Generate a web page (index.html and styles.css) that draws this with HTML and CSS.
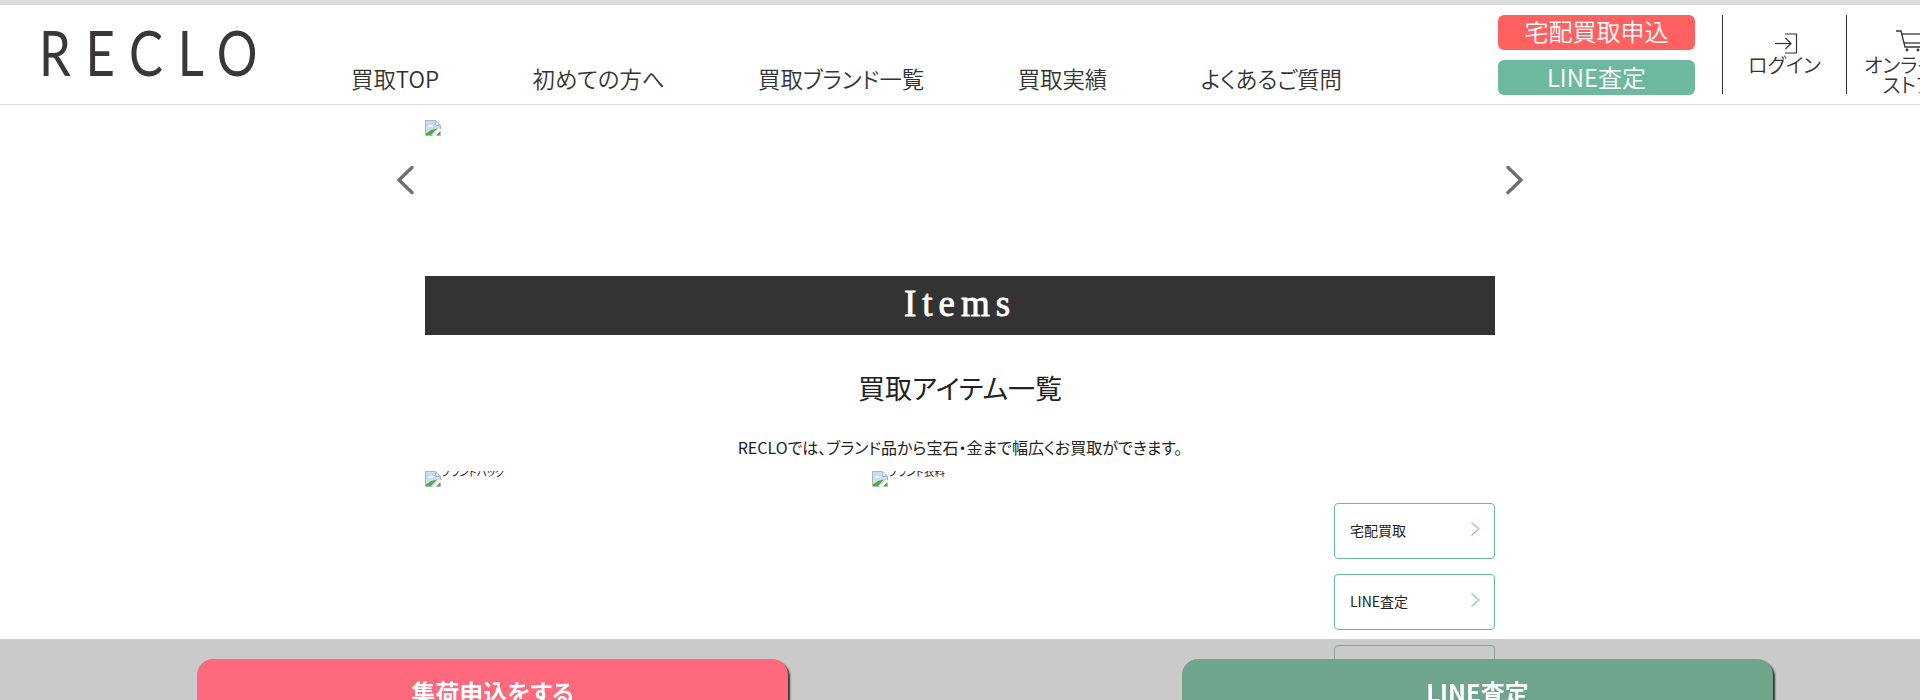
FILE: index.html
```html
<!DOCTYPE html>
<html lang="ja">
<head>
<meta charset="utf-8">
<title>RECLO</title>
<link rel="stylesheet" href="styles.css">
</head>
<body>
<svg class="defs" width="0" height="0" aria-hidden="true">
  <symbol id="broken" viewBox="0 0 16 16">
    <path d="M.5 .5H10.5L15.5 5.5V15.5H.5Z" fill="#c9dcf8" stroke="#b4b4b4"/>
    <path d="M10.5 .5V5.5H15.5Z" fill="#fff" stroke="#b4b4b4"/>
    <path d="M3 7Q5.5 3 8.5 7Z" fill="#fff"/>
    <path d="M1 15V13.5L6 10L12 8.5L6 15Z" fill="#4fae3c"/>
    <path d="M7 16L14 8.5L16 9.5V11L11 16Z" fill="#fff"/>
    <path d="M11.5 15L15 11.5V15Z" fill="#4fae3c"/>
  </symbol>
</svg>
<header class="header">
  <div class="logo-box"><a class="logo">RECLO</a></div>
  <nav class="nav">
    <a>買取TOP</a>
    <a>初めての方へ</a>
    <a>買取ブランド一覧</a>
    <a>買取実績</a>
    <a>よくあるご質問</a>
  </nav>
  <div class="cta">
    <a class="cta-btn cta-red">宅配買取申込</a>
    <a class="cta-btn cta-green">LINE査定</a>
  </div>
  <a class="util util-login">
    <svg class="util-icon" width="24" height="21" viewBox="0 0 24 21" fill="none" stroke="#333" stroke-width="1.2"><path d="M11 1H22.5V20H11"/><path d="M1 10.5H17"/><path d="M11.5 5L17 10.5L11.5 16"/></svg>
    <span>ログイン</span>
  </a>
  <a class="util util-store">
    <svg class="util-icon" width="26" height="22" viewBox="0 0 26 22" fill="none" stroke="#333" stroke-width="1.3"><path d="M0 1H5L9 17H25"/><path d="M6 4H26"/><path d="M8 13H26"/><circle cx="11" cy="20" r="1.4" fill="#333" stroke="none"/><circle cx="22" cy="20" r="1.4" fill="#333" stroke="none"/></svg>
    <span>オンライン<br>ストア</span>
  </a>
</header>
<main class="main">
  <section class="carousel">
    <svg class="broken"><use href="#broken"/></svg>
    <svg class="arrow arrow-left" width="20" height="32" viewBox="0 0 20 32" fill="none" stroke="#6e6e6e" stroke-width="3.4" stroke-linecap="round"><path d="M17 3.5L4 16L17 28.5"/></svg>
    <svg class="arrow arrow-right" width="20" height="32" viewBox="0 0 20 32" fill="none" stroke="#6e6e6e" stroke-width="3.4" stroke-linecap="round"><path d="M3 3.5L16 16L3 28.5"/></svg>
  </section>
  <h2 class="band">Items</h2>
  <h3 class="title">買取アイテム一覧</h3>
  <p class="lead">RECLOでは、ブランド品から宝石・金まで幅広くお買取ができます。</p>
  <div class="items">
    <div class="thumb"><svg class="broken"><use href="#broken"/></svg><span class="alt">ブランドバッグ</span></div>
    <div class="thumb"><svg class="broken"><use href="#broken"/></svg><span class="alt">ブランド衣料</span></div>
    <div class="cards">
      <a class="card">宅配買取<svg class="chev" width="11" height="16" viewBox="0 0 11 16" fill="none" stroke="#8fcdb8" stroke-width="1.2"><path d="M1.5 1.5L9 8L1.5 14.5"/></svg></a>
      <a class="card">LINE査定<svg class="chev" width="11" height="16" viewBox="0 0 11 16" fill="none" stroke="#8fcdb8" stroke-width="1.2"><path d="M1.5 1.5L9 8L1.5 14.5"/></svg></a>
      <a class="card">店頭買取</a>
    </div>
  </div>
</main>
<div class="sticky">
  <a class="sticky-btn sticky-pink">集荷申込をする</a>
  <a class="sticky-btn sticky-green">LINE査定</a>
</div>
</body>
</html>
```

FILE: styles.css
```css
* { box-sizing: border-box; }
html, body { height: 100%; }
body {
  margin: 0;
  height: 700px;
  overflow: hidden;
  background: #fff;
  color: #333;
  font-family: "Noto Sans CJK JP", "Noto Sans", sans-serif;
  font-feature-settings: "palt";
}
.defs { position: absolute; }
.header {
  display: flex;
  width: 1980px;
  height: 105px;
  border-top: 5px solid #dcdcdc;
  border-bottom: 1px solid #dcdcdc;
}
.logo-box {
  width: 351px;
  padding: 13px 0 0 39px;
}
.logo {
  display: inline-block;
  font-family: Lato, sans-serif;
  font-weight: 400;
  font-size: 62px;
  line-height: 68px;
  letter-spacing: 18px;
  color: #3a3836;
  transform: scaleX(.82);
  transform-origin: left center;
}
.nav {
  display: flex;
  gap: 93.5px;
  width: 1147px;
  padding-top: 55px;
  font-size: 22.4px;
  line-height: 36px;
  font-weight: 350;
}
.cta {
  display: flex;
  flex-direction: column;
  gap: 10px;
  width: 197px;
  padding-top: 10px;
}
.cta-btn {
  display: block;
  height: 35px;
  border-radius: 6px;
  color: #fff;
  font-size: 24px;
  line-height: 32px;
  font-weight: 350;
  text-align: center;
}
.cta-red { background: #ff6161; }
.cta-green { background: #6db9a0; line-height: 33px; }
.util {
  display: flex;
  flex-direction: column;
  align-items: center;
  flex: none;
  width: 124px;
  height: 79px;
  margin-top: 10px;
  border-left: 1px solid #333;
  font-size: 20px;
  line-height: 20px;
  font-weight: 350;
  text-align: center;
}
.util-login { margin-left: 27px; padding-top: 18px; }
.util-login .util-icon { margin: 0 0 1px 2px; }
.util-store { padding-top: 15px; }
.util-store .util-icon { margin: 0 0 3px 0; }
.util-icon { display: block; flex: none; }
.main { width: 1070px; margin: 0 auto; }
.carousel { position: relative; height: 171px; padding-top: 15px; }
.broken { display: block; flex: none; width: 16px; height: 16px; }
.arrow { position: absolute; top: 59px; }
.arrow-left { left: -30px; }
.arrow-right { right: -30px; }
.band {
  margin: 0;
  height: 59px;
  background: #333;
  color: #fff;
  font-family: "Liberation Serif", serif;
  font-size: 37px;
  line-height: 55px;
  font-weight: 400;
  letter-spacing: 6px;
  -webkit-text-stroke: .8px #fff;
  text-align: center;
}
.title {
  margin: 0;
  padding-top: 32px;
  font-size: 27px;
  line-height: 42px;
  font-weight: 400;
  color: #222;
  text-align: center;
}
.lead {
  margin: 0;
  padding-top: 26px;
  font-size: 16px;
  line-height: 24px;
  color: #222;
  text-align: center;
}
.items {
  display: grid;
  grid-template-columns: 447px 462px 161px;
  padding-top: 12px;
}
.thumb { display: flex; height: 20px; overflow: hidden; }
.alt {
  margin-top: -10px;
  font-size: 10.5px;
  line-height: 22px;
  color: #222;
}
.cards {
  display: flex;
  flex-direction: column;
  gap: 15px;
  padding-top: 32px;
}
.card {
  position: relative;
  display: block;
  height: 56px;
  padding-left: 15px;
  border: 1px solid #6db9a0;
  border-radius: 4px;
  background: #fff;
  color: #222;
  font-size: 14px;
  line-height: 53px;
}
.chev { position: absolute; top: 17px; right: 13px; }
.sticky {
  position: fixed;
  left: 0;
  right: 0;
  bottom: 0;
  display: flex;
  height: 61px;
  padding: 20px 0 0 197px;
  gap: 394px;
  overflow: hidden;
  background: rgba(150, 150, 150, .5);
}
.sticky-btn {
  display: block;
  flex: none;
  width: 591px;
  height: 90px;
  border-radius: 16px;
  box-shadow: 2px 2px 2px #333;
  color: #fff;
  font-size: 24px;
  line-height: 66px;
  font-weight: 700;
  text-align: center;
}
.sticky-pink { background: #ff697d; }
.sticky-green { background: #6fa58c; }
```
